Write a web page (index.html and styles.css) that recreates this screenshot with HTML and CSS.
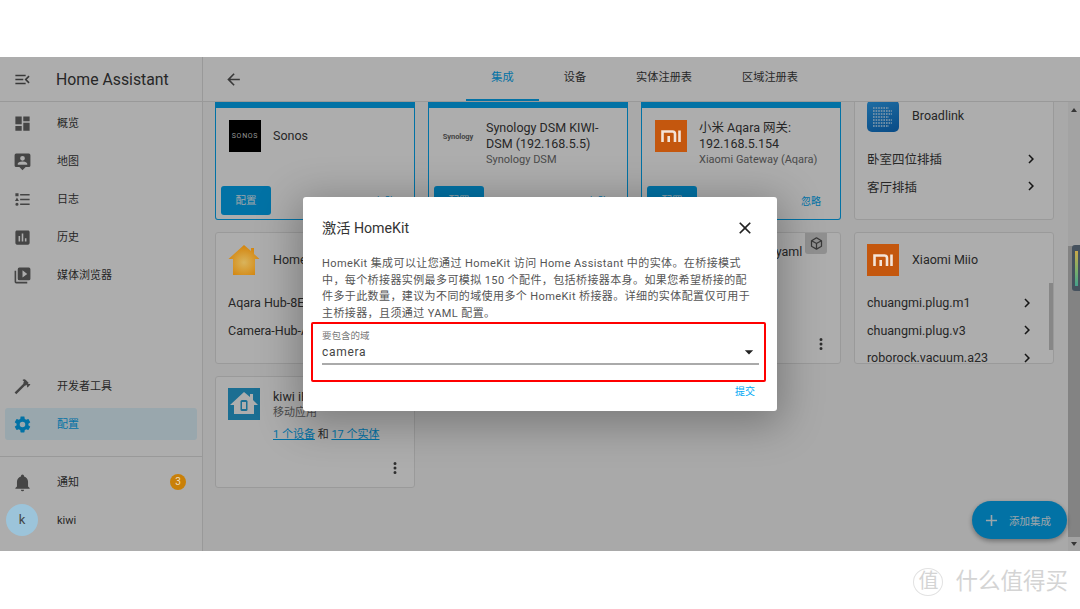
FILE: index.html
```html
<!DOCTYPE html>
<html lang="zh">
<head>
<meta charset="utf-8">
<title>Home Assistant</title>
<link rel="stylesheet" href="styles.css">
</head>
<body>
<div class="top-gap"></div>
<div class="app">
  <aside class="sidebar">
    <div class="side-head">
      <svg class="ico" viewBox="0 0 24 24"><path d="M21,15.61L19.59,17L14.58,12L19.59,7L21,8.39L17.44,12L21,15.61M3,6H16V8H3V6M3,13V11H13V13H3M3,18V16H16V18H3Z"/></svg>
      <span class="app-title">Home Assistant</span>
    </div>
    <nav class="nav">
      <a class="nav-item"><svg class="ico" viewBox="0 0 24 24"><path d="M13,3V9H21V3M13,21H21V11H13M3,21H11V15H3M3,13H11V3H3V13Z"/></svg><span>概览</span></a>
      <a class="nav-item"><svg class="ico" viewBox="0 0 24 24"><path fill-rule="evenodd" d="M4 2H20A2 2 0 0 1 22 4V17A2 2 0 0 1 20 19H16L12 23L8 19H4A2 2 0 0 1 2 17V4A2 2 0 0 1 4 2ZM12 5A3 3 0 1 0 12 11A3 3 0 1 0 12 5ZM6 16H18V15C18 13 14 12 12 12C10 12 6 13 6 15Z"/></svg><span>地图</span></a>
      <a class="nav-item"><svg class="ico" viewBox="0 0 24 24"><path d="M5,9.5L7.5,14H2.5L5,9.5M3,4H7V8H3V4M5,20A2,2 0 0,0 7,18A2,2 0 0,0 5,16A2,2 0 0,0 3,18A2,2 0 0,0 5,20M9,5V7H21V5H9M9,19H21V17H9V19M9,13H21V11H9V13Z"/></svg><span>日志</span></a>
      <a class="nav-item"><svg class="ico" viewBox="0 0 24 24"><path d="M9 17H7V10H9V17M13 17H11V7H13V17M17 17H15V13H17V17M19 3H5C3.9 3 3 3.9 3 5V19C3 20.1 3.9 21 5 21H19C20.1 21 21 20.1 21 19V5C21 3.9 20.1 3 19 3Z"/></svg><span>历史</span></a>
      <a class="nav-item"><svg class="ico" viewBox="0 0 24 24"><path d="M4,6H2V20A2,2 0 0,0 4,22H18V20H4V6M20,2H8A2,2 0 0,0 6,4V16A2,2 0 0,0 8,18H20A2,2 0 0,0 22,16V4A2,2 0 0,0 20,2M12,14.5V5.5L18,10L12,14.5Z"/></svg><span>媒体浏览器</span></a>
    </nav>
    <div class="nav nav-lower">
      <a class="nav-item"><svg class="ico" viewBox="0 0 24 24"><path d="M2 19.63L13.43 8.2L12.72 7.5L14.14 6.07L12 3.89C13.2 2.7 15.09 2.7 16.27 3.89L19.87 7.5L18.45 8.91H21.29L22 9.62L18.45 13.21L17.74 12.5V9.62L16.27 11.04L15.56 10.33L4.13 21.76L2 19.63Z"/></svg><span>开发者工具</span></a>
      <a class="nav-item active"><svg class="ico" viewBox="0 0 24 24"><path d="M12,15.5A3.5,3.5 0 0,1 8.5,12A3.5,3.5 0 0,1 12,8.5A3.5,3.5 0 0,1 15.5,12A3.5,3.5 0 0,1 12,15.5M19.43,12.97C19.47,12.65 19.5,12.33 19.5,12C19.5,11.67 19.47,11.34 19.43,11L21.54,9.37C21.73,9.22 21.78,8.95 21.66,8.73L19.66,5.27C19.54,5.05 19.27,4.96 19.05,5.05L16.56,6.05C16.04,5.66 15.5,5.32 14.87,5.07L14.5,2.42C14.46,2.18 14.25,2 14,2H10C9.75,2 9.54,2.18 9.5,2.42L9.13,5.07C8.5,5.32 7.96,5.66 7.44,6.05L4.95,5.05C4.73,4.96 4.46,5.05 4.34,5.27L2.34,8.73C2.21,8.95 2.27,9.22 2.46,9.37L4.57,11C4.53,11.34 4.5,11.67 4.5,12C4.5,12.33 4.53,12.65 4.57,12.97L2.46,14.63C2.27,14.78 2.21,15.05 2.34,15.27L4.34,18.73C4.46,18.95 4.73,19.03 4.95,18.95L7.44,17.94C7.96,18.34 8.5,18.68 9.13,18.93L9.5,21.58C9.54,21.82 9.75,22 10,22H14C14.25,22 14.46,21.82 14.5,21.58L14.87,18.93C15.5,18.67 16.04,18.34 16.56,17.94L19.05,18.95C19.27,19.03 19.54,18.95 19.66,18.73L21.66,15.27C21.78,15.05 21.73,14.78 21.54,14.63L19.43,12.97Z"/></svg><span>配置</span></a>
    </div>
    <div class="side-foot">
      <a class="nav-item"><svg class="ico" viewBox="0 0 24 24"><path d="M21,19V20H3V19L5,17V11C5,7.9 7.03,5.17 10,4.29C10,4.19 10,4.1 10,4A2,2 0 0,1 12,2A2,2 0 0,1 14,4C14,4.1 14,4.19 14,4.29C16.97,5.17 19,7.9 19,11V17L21,19M14,21A2,2 0 0,1 12,23A2,2 0 0,1 10,21"/></svg><span class="grow">通知</span><b class="badge raised">3</b></a>
      <a class="user"><span class="avatar raised">k</span><span>kiwi</span></a>
    </div>
  </aside>

  <main class="main">
    <header class="main-head">
      <svg class="ico" viewBox="0 0 24 24"><path d="M20,11V13H8L13.5,18.5L12.08,19.92L4.16,12L12.08,4.08L13.5,5.5L8,11H20Z"/></svg>
      <div class="tabs">
        <a class="tab on">集成</a>
        <a class="tab">设备</a>
        <a class="tab">实体注册表</a>
        <a class="tab">区域注册表</a>
      </div>
    </header>
    <div class="main-body">
      <section class="grid">
        <article class="card new mid">
          <div class="card-top"><div class="logo sonos">SONOS</div><div class="names"><div class="name">Sonos</div></div></div>
          <div class="actions"><a class="btn">配置</a><a class="ignore">忽略</a></div>
        </article>
        <article class="card new">
          <div class="card-top"><div class="logo synology">Synology</div><div class="names"><div class="name">Synology DSM KIWI-DSM (192.168.5.5)</div><div class="sub">Synology DSM</div></div></div>
          <div class="actions"><a class="btn">配置</a><a class="ignore">忽略</a></div>
        </article>
        <article class="card new">
          <div class="card-top"><div class="logo mi raised"><svg viewBox="0 0 32 32"><path fill="none" stroke="#f4e4d8" stroke-width="2.600" d="M7.500 22V11.500H17.500Q20 11.500 20 14V22M13.700 16V22M24.500 10.500V22"/></svg></div><div class="names"><div class="name">小米 Aqara 网关: 192.168.5.154</div><div class="sub">Xiaomi Gateway (Aqara)</div></div></div>
          <div class="actions"><a class="btn">配置</a><a class="ignore">忽略</a></div>
        </article>
        <article class="card broadlink">
          <div class="card-top"><div class="logo bl"><svg viewBox="0 0 32 32"><path fill="none" stroke="#9fd0f5" stroke-width="2.200" stroke-dasharray="1.600 1" d="M6 8H22M6 11H25M6 14H25M6 17H22M6 20H25M6 23H25M6 26H22"/></svg></div><div class="names"><div class="name">Broadlink</div></div></div>
          <ul class="rows">
            <li>卧室四位排插<svg class="ico chev" viewBox="0 0 24 24"><path d="M8.59,16.58L13.17,12L8.59,7.41L10,6L16,12L10,18L8.59,16.58Z"/></svg></li>
            <li>客厅排插<svg class="ico chev" viewBox="0 0 24 24"><path d="M8.59,16.58L13.17,12L8.59,7.41L10,6L16,12L10,18L8.59,16.58Z"/></svg></li>
          </ul>
        </article>

        <article class="card">
          <div class="card-top"><div class="logo home raised"><svg viewBox="0 0 32 32"><defs><radialGradient id="hk" cx=".5" cy=".58" r=".55"><stop offset="0" stop-color="#d9b45c"/><stop offset="1" stop-color="#d4860f"/></radialGradient></defs><path fill="url(#hk)" d="M16 1L23 7V4H26V10L31.500 15H27V31H5V15H.5Z"/></svg></div><div class="names"><div class="name">HomeKit</div></div></div>
          <ul class="rows">
            <li>Aqara Hub-8E5F</li>
            <li>Camera-Hub-A1</li>
          </ul>
        </article>
        <article class="card"></article>
        <article class="card top-name">
          <span class="yaml-tag"><svg class="ico" viewBox="0 0 24 24"><path d="M21,16.5C21,16.88 20.79,17.21 20.47,17.38L12.57,21.82C12.41,21.94 12.21,22 12,22C11.79,22 11.59,21.94 11.43,21.82L3.53,17.38C3.21,17.21 3,16.88 3,16.5V7.5C3,7.12 3.21,6.79 3.53,6.62L11.43,2.18C11.59,2.06 11.79,2 12,2C12.21,2 12.41,2.06 12.57,2.18L20.47,6.62C20.79,6.79 21,7.12 21,7.5V16.5M12,4.15L6.04,7.5L12,10.85L17.96,7.5L12,4.15M5,15.91L11,19.29V12.58L5,9.21V15.91M19,15.91V9.21L13,12.58V19.29L19,15.91Z"/></svg></span>
          <div class="card-top"><div class="logo blank"></div><div class="names"><div class="name">configuration.yaml</div></div></div>
          <a class="more"><svg class="ico" viewBox="0 0 24 24"><path d="M12,16A2,2 0 0,1 14,18A2,2 0 0,1 12,20A2,2 0 0,1 10,18A2,2 0 0,1 12,16M12,10A2,2 0 0,1 14,12A2,2 0 0,1 12,14A2,2 0 0,1 10,12A2,2 0 0,1 12,10M12,4A2,2 0 0,1 14,6A2,2 0 0,1 12,8A2,2 0 0,1 10,6A2,2 0 0,1 12,4Z"/></svg></a>
        </article>
        <article class="card clip">
          <div class="card-top"><div class="logo mi raised"><svg viewBox="0 0 32 32"><path fill="none" stroke="#f4e4d8" stroke-width="2.600" d="M7.500 22V11.500H17.500Q20 11.500 20 14V22M13.700 16V22M24.500 10.500V22"/></svg></div><div class="names"><div class="name">Xiaomi Miio</div></div></div>
          <ul class="rows">
            <li>chuangmi.plug.m1<svg class="ico chev" viewBox="0 0 24 24"><path d="M8.59,16.58L13.17,12L8.59,7.41L10,6L16,12L10,18L8.59,16.58Z"/></svg></li>
            <li>chuangmi.plug.v3<svg class="ico chev" viewBox="0 0 24 24"><path d="M8.59,16.58L13.17,12L8.59,7.41L10,6L16,12L10,18L8.59,16.58Z"/></svg></li>
            <li>roborock.vacuum.a23<svg class="ico chev" viewBox="0 0 24 24"><path d="M8.59,16.58L13.17,12L8.59,7.41L10,6L16,12L10,18L8.59,16.58Z"/></svg></li>
          </ul>
          <span class="card-scroll"></span>
        </article>

        <article class="card kiwi">
          <div class="card-top"><div class="logo app-logo"><svg viewBox="0 0 32 32"><path fill="#fff" d="M16 4L22 9V6H25V12L30 17H26V26H6V17H2Z"/><rect x="12.500" y="12" width="7" height="11" rx="1.500" fill="#29a3d8"/><rect x="14" y="14" width="4" height="7" fill="#fff"/></svg></div><div class="names"><div class="name">kiwi iPhone</div><div class="sub">移动应用</div></div></div>
          <div class="links"><a>1 个设备</a> 和 <a>17 个实体</a></div>
          <a class="more"><svg class="ico" viewBox="0 0 24 24"><path d="M12,16A2,2 0 0,1 14,18A2,2 0 0,1 12,20A2,2 0 0,1 10,18A2,2 0 0,1 12,16M12,10A2,2 0 0,1 14,12A2,2 0 0,1 12,14A2,2 0 0,1 10,12A2,2 0 0,1 12,10M12,4A2,2 0 0,1 14,6A2,2 0 0,1 12,8A2,2 0 0,1 10,6A2,2 0 0,1 12,4Z"/></svg></a>
        </article>
      </section>
      <div class="scrollbar">
        <span class="arrow up"></span>
        <span class="thumb"></span>
        <span class="arrow down"></span>
      </div>
    </div>
  </main>

  <a class="fab"><svg class="ico" viewBox="0 0 24 24"><path d="M19,13H13V19H11V13H5V11H11V5H13V11H19V13Z"/></svg><span>添加集成</span></a>

  <div class="scrim">
    <div class="dialog">
      <div class="dlg-head">
        <h2>激活 HomeKit</h2>
        <svg class="ico close" viewBox="0 0 24 24"><path d="M19,6.41L17.59,5L12,10.59L6.41,5L5,6.41L10.59,12L5,17.59L6.41,19L12,13.41L17.59,19L19,17.59L13.41,12L19,6.41Z"/></svg>
      </div>
      <p class="dlg-text">HomeKit 集成可以让您通过 HomeKit 访问 Home Assistant 中的实体。在桥接模式<br>中，每个桥接器实例最多可模拟 150 个配件，包括桥接器本身。如果您希望桥接的配<br>件多于此数量，建议为不同的域使用多个 HomeKit 桥接器。详细的实体配置仅可用于<br>主桥接器，且须通过 YAML 配置。</p>
      <div class="marked">
        <div class="field">
          <label>要包含的域</label>
          <div class="value"><span>camera</span><svg class="ico drop" viewBox="0 0 24 24"><path d="M7,10L12,15L17,10H7Z"/></svg></div>
        </div>
      </div>
      <div class="dlg-foot"><a>提交</a></div>
    </div>
  </div>

  <div class="meter"><span></span></div>
</div>
<footer class="bottom-gap">
  <span class="wm-badge">值</span>
  <span class="wm-text">什么值得买</span>
</footer>
</body>
</html>
```
FILE: styles.css
```css
* { box-sizing: border-box; }
html, body { margin: 0; height: 100%; }
body {
  width: 1080px;
  height: 609px;
  overflow: hidden;
  background: #fff;
  font-family: Roboto, "Noto Sans CJK SC", sans-serif;
  color: #3a3a3a;
  display: flex;
  flex-direction: column;
}
ul { list-style: none; margin: 0; padding: 0; }
a { color: inherit; text-decoration: none; }
.ico { display: block; width: 19px; height: 19px; fill: currentColor; flex: none; }
.raised { position: relative; z-index: 2; }

.top-gap { height: 57px; flex: none; }
.app {
  height: 494px;
  flex: none;
  display: flex;
  position: relative;
  background: #fafafa;
  overflow: hidden;
}

/* sidebar */
.sidebar {
  width: 203px;
  flex: none;
  background: #fff;
  border-right: 1px solid #e2e2e2;
  display: flex;
  flex-direction: column;
  font-size: 11px;
}
.side-head {
  height: 45px;
  flex: none;
  display: flex;
  align-items: center;
  padding-left: 13px;
  border-bottom: 1px solid #e2e2e2;
  color: #555;
}
.app-title { margin-left: 24px; font-size: 15.800px; color: #3a3a3a; }
.nav { display: flex; flex-direction: column; gap: 6px; padding: 5px 5px 0; }
.nav-lower { margin-top: auto; padding-bottom: 16px; }
.nav-item {
  height: 32px;
  display: flex;
  align-items: center;
  padding-left: 8px;
  border-radius: 3px;
  color: #3a3a3a;
}
.nav-item span { position: relative; top: -1px; }
.nav-item .ico { color: #666; margin-right: 25px; }
.nav-item.active { background: #e2f6ff; color: #03a9f4; }
.nav-item.active .ico { color: #03a9f4; }
.grow { flex: 1; }
.side-foot {
  height: 95px;
  flex: none;
  border-top: 1px solid #e2e2e2;
  padding: 9px 5px 0;
  display: flex;
  flex-direction: column;
  gap: 6px;
}
.badge {
  width: 16px;
  height: 16px;
  border-radius: 50%;
  background: #c98008;
  color: #f0dfc0;
  font-weight: 400;
  font-size: 10px;
  line-height: 16px;
  text-align: center;
  margin-right: 11px;
}
.user { display: flex; align-items: center; padding-left: 1px; gap: 19px; color: #3a3a3a; }
.avatar {
  width: 32px;
  height: 32px;
  border-radius: 50%;
  background: #9cc4da;
  color: #444;
  font-size: 13px;
  line-height: 32px;
  text-align: center;
}

/* main */
.main { flex: 1; display: flex; flex-direction: column; min-width: 0; }
.main-head {
  height: 45px;
  flex: none;
  display: flex;
  align-items: center;
  padding-left: 21px;
  background: #fff;
  border-bottom: 1px solid #e2e2e2;
  color: #555;
}
.tabs { margin-left: auto; margin-right: 257px; display: flex; height: 44px; font-size: 11.200px; color: #3a3a3a; }
.tab { padding: 0 25px; line-height: 41px; border-bottom: 2px solid transparent; }
.tab.on { color: #03a9f4; border-bottom-color: #03a9f4; }

.main-body { flex: 1; display: flex; min-height: 0; }
.grid {
  flex: 1;
  min-width: 0;
  overflow: hidden;
  padding-left: 12px;
  display: grid;
  grid-template-columns: repeat(4, 200px);
  grid-template-rows: 118px 132px 112px;
  column-gap: 13px;
  row-gap: 12px;
  align-content: start;
}
.card {
  background: #fff;
  border: 1px solid #e4e4e4;
  border-radius: 3px;
  position: relative;
  display: flex;
  flex-direction: column;
  padding: 11px 13px 0 12px;
  overflow: hidden;
}
.card.new {
  border-color: #03a9f4;
  border-top: 6px solid #03a9f4;
  padding: 12px 5px 4px;
  border-radius: 0 0 3px 3px;
}
.card.new .card-top { padding: 0 8px; align-items: flex-start; }
.card.new.mid .card-top { align-items: center; min-height: 32px; }
.card-top { display: flex; gap: 13px; min-height: 32px; align-items: center; }
.card.new .card-top { gap: 12px; }
.top-name .card-top { align-items: flex-start; }
.names { min-width: 0; flex: 1; }
.name { font-size: 12.500px; line-height: 16px; }
.sub { font-size: 11px; line-height: 15px; color: #6f6f6f; }
.logo { width: 32px; height: 32px; flex: none; display: flex; align-items: center; justify-content: center; }
.logo svg { width: 32px; height: 32px; display: block; }
.sonos { background: #000; color: #d8d8d8; font-size: 7px; letter-spacing: .7px; }
.synology { color: #666; font-size: 7.500px; font-weight: 700; letter-spacing: -.1px; }
.mi { background: #c4570e; }
.bl { background: linear-gradient(160deg, #2ea3f2, #0d6fc6); border-radius: 5px; }
.app-logo { background: #29a3d8; }
.blank { background: transparent; }

.broadlink { margin-top: -14px; }
.rows { margin-top: 13px; font-size: 12.500px; }
.rows li { height: 27.500px; display: flex; align-items: center; justify-content: space-between; padding-right: 0; }
.chev { width: 18px; height: 18px; color: #222; }
.clip .rows li { padding-right: 4px; }
.card-scroll {
  position: absolute;
  right: 0;
  top: 50px;
  width: 4px;
  height: 67px;
  background: #c8c8c8;
}
.actions { margin-top: auto; display: flex; align-items: center; justify-content: space-between; padding-right: 14px; }
.btn {
  width: 50px;
  height: 29px;
  border-radius: 3px;
  background: #03a9f4;
  color: #e6f3fa;
  font-size: 10.500px;
  line-height: 29px;
  text-align: center;
}
.ignore { color: #03a9f4; font-size: 10px; }
.yaml-tag {
  position: absolute;
  top: -1px;
  right: 13px;
  width: 22px;
  height: 22px;
  background: #d4d4d4;
  border-radius: 0 0 3px 3px;
  display: flex;
  align-items: center;
  justify-content: center;
  color: #555;
}
.yaml-tag .ico { width: 15px; height: 15px; }
.more { position: absolute; right: 10px; bottom: 10px; color: #444; }
.more .ico { width: 18px; height: 18px; }
.links { font-size: 11px; margin: 7px 0 0 45px; line-height: 16px; }
.links a { color: #03a9f4; text-decoration: underline; }
.scrollbar {
  width: 12px;
  flex: none;
  background: #f1f1f1;
  display: flex;
  flex-direction: column;
  align-items: center;
}
.arrow { width: 0; height: 0; border: 3px solid transparent; flex: none; }
.arrow.up { border-bottom: 4px solid #505050; border-top: 0; margin: 6px 0 134px; }
.arrow.down { border-top: 4px solid #505050; border-bottom: 0; margin: 5px 0; }
.thumb { flex: 1; width: 100%; background: #c2c2c2; }

/* FAB */
.fab {
  position: absolute;
  left: 972px;
  top: 444px;
  width: 95px;
  height: 38px;
  border-radius: 19px;
  background: #03a9f4;
  color: #e8f4fb;
  display: flex;
  align-items: center;
  padding-left: 10px;
  gap: 8px;
  font-size: 10.500px;
  box-shadow: 0 2px 5px rgba(0,0,0,.35);
}

/* dialog */
.scrim {
  position: absolute;
  inset: 0;
  z-index: 1;
  background: rgba(0,0,0,.32);
  display: flex;
  align-items: center;
  justify-content: center;
}
.dialog {
  width: 474px;
  height: 214px;
  background: #fff;
  border-radius: 3px;
  padding: 0 19px;
  display: flex;
  flex-direction: column;
  box-shadow: 0 8px 40px 6px rgba(0,0,0,.28);
}
.dlg-head { display: flex; align-items: center; justify-content: space-between; height: 52px; flex: none; padding-top: 7px; padding-right: 3px; }
h2 { margin: 0; font-size: 14.200px; font-weight: 400; color: #333; }
.close { width: 20px; height: 20px; color: #222; margin-top: 3px; }
.dlg-text { margin: 7px 0 0; height: 66px; font-size: 11px; line-height: 16.700px; color: #555; white-space: nowrap; letter-spacing: .4px; }
.marked {
  margin: 0 -8px 0 -11px;
  height: 60px;
  border: 2px solid #f00;
  border-radius: 2px;
  padding: 6px 5px 0 9px;
  flex: none;
}
.field label { display: block; font-size: 9.500px; line-height: 11px; color: #777; }
.value {
  display: flex;
  align-items: center;
  justify-content: space-between;
  height: 24px;
  border-bottom: 2px solid #aaa;
  font-size: 12px;
  letter-spacing: .7px;
  color: #444;
}
.drop { width: 20px; height: 20px; color: #222; }
.dlg-foot { display: flex; justify-content: flex-end; padding: 1px 3px 0 0; font-size: 10px; color: #03a9f4; }

.meter {
  position: absolute;
  z-index: 2;
  right: 0;
  top: 188px;
  width: 8px;
  height: 46px;
  background: #46525e;
  border-radius: 3px 0 0 3px;
  padding: 6px 2px 5px 3px;
}
.meter span { display: block; height: 100%; background: linear-gradient(#c9a84a, #7cae6a 55%, #46a08c); }

/* watermark */
.bottom-gap {
  flex: 1;
  display: flex;
  justify-content: flex-end;
  align-items: center;
  padding: 3px 12px 0 0;
  color: #d4d4d4;
}
.wm-badge {
  width: 30px;
  height: 28px;
  border: 1px solid #e2e2e2;
  border-radius: 50%;
  font-size: 20px;
  line-height: 25px;
  text-align: center;
  margin-right: 12px;
}
.wm-text { font-size: 22.500px; line-height: 1; }
```
